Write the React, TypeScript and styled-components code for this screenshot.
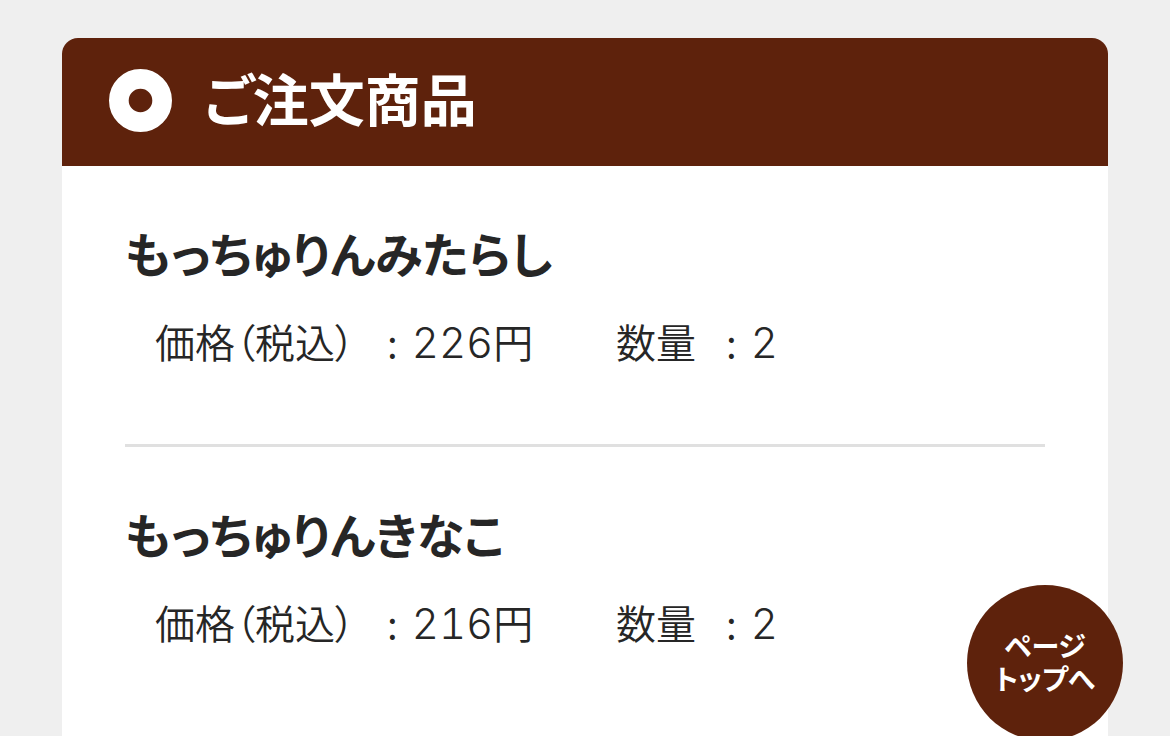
import React from "react";
import styled, { createGlobalStyle } from "styled-components";

const Global = createGlobalStyle`
  *, *::before, *::after { box-sizing: border-box; }
  html { overflow: hidden; }
  body {
    margin: 0;
    background: #efefef;
    color: #262626;
    font-family: "Noto Sans CJK JP", sans-serif;
    font-feature-settings: "palt";
  }
`;

const Page = styled.main`
  height: 100vh;
  overflow: hidden;
  padding: 38px 62px 0;
`;

const Card = styled.section`
  overflow: hidden;
  border-radius: 16px;
  background: #fff;
`;

const CardHeader = styled.header`
  display: flex;
  align-items: center;
  gap: 32px;
  height: 128px;
  padding: 0 47px 4px;
  background: #5e220c;
  color: #fff;
`;

const Ring = styled.svg`
  flex: none;
  width: 63px;
  height: 63px;
`;

const CardTitle = styled.h1`
  margin: 0;
  padding-bottom: 6px;
  font-size: 56px;
  font-weight: 700;
  line-height: 64px;
`;

const Items = styled.ul`
  margin: 0;
  padding: 0 63px 32px;
  list-style: none;
`;

const Item = styled.li`
  padding: 54px 0 70px;

  & + & {
    border-top: 3px solid #e0e0e0;
  }
`;

const ItemName = styled.h2`
  margin: 0 0 26px;
  font-size: 48px;
  font-weight: 700;
  line-height: 64px;
`;

const Details = styled.dl`
  display: flex;
  margin: 0;
  padding-left: 30px;
  font-size: 40px;
  font-weight: 350;
  line-height: 62px;
`;

const Detail = styled.div<{ $width: number }>`
  display: flex;
  width: ${(p) => p.$width}px;
`;

const Label = styled.dt<{ $width: number }>`
  width: ${(p) => p.$width}px;
  white-space: nowrap;
`;

const Value = styled.dd`
  display: flex;
  align-items: baseline;
  gap: 14px;
  margin: 0;
  white-space: nowrap;
`;

const Digits = styled.span`
  font-family: Inter, "Liberation Sans", sans-serif;
  font-size: 42px;
  font-weight: 300;
  font-feature-settings: "tnum";
`;

const TopButton = styled.button`
  position: fixed;
  right: 47px;
  bottom: -5px;
  width: 156px;
  height: 156px;
  padding: 0 0 2px;
  border: 0;
  border-radius: 50%;
  background: #5e220c;
  color: #fff;
  font-family: inherit;
  font-size: 28px;
  font-weight: 700;
  line-height: 33px;
  font-feature-settings: "palt";
`;

const products = [
  { name: "もっちゅりんみたらし", price: 226, quantity: 2 },
  { name: "もっちゅりんきなこ", price: 216, quantity: 2 },
];

export default function App() {
  return (
    <>
      <Global />
      <Page lang="ja">
        <Card>
          <CardHeader>
            <Ring viewBox="0 0 64 64" aria-hidden="true">
              <circle cx="32" cy="32" r="22" fill="none" stroke="#fff" strokeWidth="20" />
            </Ring>
            <CardTitle>ご注文商品</CardTitle>
          </CardHeader>
          <Items>
            {products.map((product) => (
              <Item key={product.name}>
                <ItemName>{product.name}</ItemName>
                <Details>
                  <Detail $width={461}>
                    <Label $width={232}>価格（税込）</Label>
                    <Value>
                      <span>:</span>
                      <span>
                        <Digits>{product.price}</Digits>円
                      </span>
                    </Value>
                  </Detail>
                  <Detail $width={200}>
                    <Label $width={110}>数量</Label>
                    <Value>
                      <span>:</span>
                      <Digits>{product.quantity}</Digits>
                    </Value>
                  </Detail>
                </Details>
              </Item>
            ))}
          </Items>
        </Card>
      </Page>
      <TopButton type="button">
        ページ
        <br />
        トップへ
      </TopButton>
    </>
  );
}
